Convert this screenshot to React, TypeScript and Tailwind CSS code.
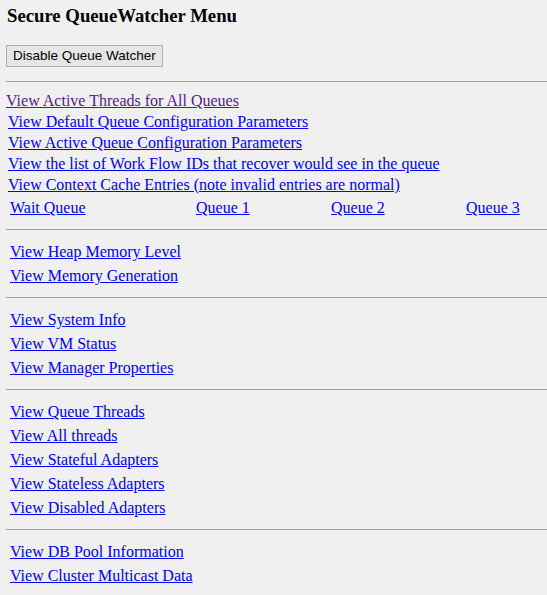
import React from "react";

const serif = { fontFamily: '"Liberation Serif", "Times New Roman", serif' };

function Row({ children, x = "pl-[10px]", visited = false }: { children: React.ReactNode; x?: string; visited?: boolean }) {
  return (
    <div className={`h-[24px] leading-[24px] text-[16px] ${x}`}>
      <a href="#" className={`underline ${visited ? "text-[#551a8b]" : "text-[#0000ee]"}`}>{children}</a>
    </div>
  );
}

function Hr() {
  return <div className="ml-[6px] h-px bg-[#a0a0a0]" />;
}

export default function App() {
  return (
    <div className="w-[547px] h-[595px] bg-[#f0f0f0] overflow-hidden text-black" style={serif}>
      <div className="pt-[5px] pl-[7px] h-[27px] text-[18.72px] font-bold leading-[22px]">Secure QueueWatcher Menu</div>
      <div className="pt-[16px] pl-[6px]">
        <button
          className="h-[22px] px-[6px] border border-[#adadad] bg-[#e6e6e6] text-[13.5px] leading-[20px] text-black"
          style={{ fontFamily: '"Liberation Sans", Arial, sans-serif' }}
        >
          Disable Queue Watcher
        </button>
      </div>
      <div className="mt-[14px]">
        <Hr />
      </div>
      <div className="mt-[8px] flex flex-col text-[16px]">
        <div className="h-[21px] leading-[21px] pl-[6px]">
          <a href="#" className="underline text-[#551a8b]">View Active Threads for All Queues</a>
        </div>
        <div className="h-[21px] leading-[21px] pl-[8px]">
          <a href="#" className="underline text-[#0000ee]">View Default Queue Configuration Parameters</a>
        </div>
        <div className="h-[21px] leading-[21px] pl-[8px]">
          <a href="#" className="underline text-[#0000ee]">View Active Queue Configuration Parameters</a>
        </div>
        <div className="h-[21px] leading-[21px] pl-[8px]">
          <a href="#" className="underline text-[#0000ee]">View the list of Work Flow IDs that recover would see in the queue</a>
        </div>
        <div className="h-[21px] leading-[21px] pl-[8px]">
          <a href="#" className="underline text-[#0000ee]">View Context Cache Entries (note invalid entries are normal)</a>
        </div>
        <div className="mt-px h-[24px] leading-[24px] pl-[10px] grid grid-cols-[186px_135px_135px_1fr]">
          <div><a href="#" className="underline text-[#0000ee]">Wait Queue</a></div>
          <div><a href="#" className="underline text-[#0000ee]">Queue 1</a></div>
          <div><a href="#" className="underline text-[#0000ee]">Queue 2</a></div>
          <div><a href="#" className="underline text-[#0000ee]">Queue 3</a></div>
        </div>
      </div>
      <div className="mt-[9px]"><Hr /></div>
      <div className="mt-[10px]">
        <Row>View Heap Memory Level</Row>
        <Row>View Memory Generation</Row>
      </div>
      <div className="mt-[9px]"><Hr /></div>
      <div className="mt-[10px]">
        <Row>View System Info</Row>
        <Row>View VM Status</Row>
        <Row>View Manager Properties</Row>
      </div>
      <div className="mt-[9px]"><Hr /></div>
      <div className="mt-[10px]">
        <Row>View Queue Threads</Row>
        <Row>View All threads</Row>
        <Row>View Stateful Adapters</Row>
        <Row>View Stateless Adapters</Row>
        <Row>View Disabled Adapters</Row>
      </div>
      <div className="mt-[9px]"><Hr /></div>
      <div className="mt-[10px]">
        <Row>View DB Pool Information</Row>
        <Row>View Cluster Multicast Data</Row>
      </div>
    </div>
  );
}
